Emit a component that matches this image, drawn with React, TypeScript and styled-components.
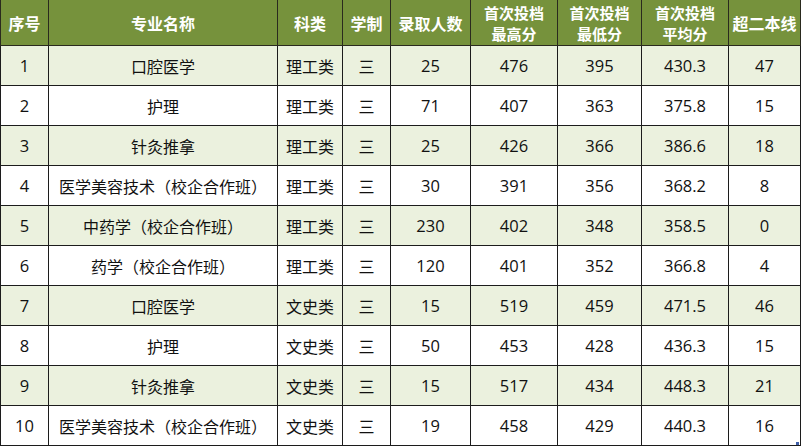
import React from "react";
import styled, { createGlobalStyle } from "styled-components";

const Global = createGlobalStyle`
  html, body { margin: 0; padding: 0; background: #ffffff; }
  body { font-family: "Open Sans", "Noto Sans CJK SC", sans-serif; }
`;

const Wrap = styled.div`
  position: relative;
  width: 800px;
`;

const Table = styled.table`
  border-collapse: collapse;
  table-layout: fixed;
  width: 800px;
  font-size: 16px;
  color: #111;
`;

const HeadCell = styled.th`
  background: #76923c;
  color: #ffffff;
  font-family: "Noto Sans CJK SC", sans-serif;
  font-weight: 700;
  font-size: 16px;
  line-height: 20px;
  height: 45px;
  padding: 0;
  text-align: center;
  vertical-align: middle;
  border: 1px solid #2a2a1e;
  border-top: none;
`;

const HeadLine = styled.span`
  display: block;
  font-size: 15px;
  line-height: 21px;
`;

const Row = styled.tr<{ $alt: boolean }>`
  background: ${(p) => (p.$alt ? "#ebf1de" : "#ffffff")};
`;

const Cell = styled.td<{ $cjk?: boolean }>`
  height: 39px;
  padding: 0;
  text-align: center;
  vertical-align: middle;
  border: 1px solid #1c1c1c;
  font-family: ${(p) =>
    p.$cjk ? `"Noto Sans CJK SC", sans-serif` : `"Open Sans", "Noto Sans CJK SC", sans-serif`};
  font-size: ${(p) => (p.$cjk ? "16px" : "16.5px")};
  white-space: nowrap;
`;

const Handle = styled.div`
  position: absolute;
  right: 1px;
  bottom: 1px;
  width: 3px;
  height: 3px;
  background: #3f5fa8;
`;

const widths = [48, 229, 65, 48, 80, 87, 84, 87, 72];

const two = (a: string, b: string) => (
  <>
    <HeadLine>{a}</HeadLine>
    <HeadLine>{b}</HeadLine>
  </>
);

const headers: React.ReactNode[] = [
  "序号",
  "专业名称",
  "科类",
  "学制",
  "录取人数",
  two("首次投档", "最高分"),
  two("首次投档", "最低分"),
  two("首次投档", "平均分"),
  "超二本线",
];

const rows: (string | number)[][] = [
  [1, "口腔医学", "理工类", "三", 25, 476, 395, "430.3", 47],
  [2, "护理", "理工类", "三", 71, 407, 363, "375.8", 15],
  [3, "针灸推拿", "理工类", "三", 25, 426, 366, "386.6", 18],
  [4, "医学美容技术（校企合作班）", "理工类", "三", 30, 391, 356, "368.2", 8],
  [5, "中药学（校企合作班）", "理工类", "三", 230, 402, 348, "358.5", 0],
  [6, "药学（校企合作班）", "理工类", "三", 120, 401, 352, "366.8", 4],
  [7, "口腔医学", "文史类", "三", 15, 519, 459, "471.5", 46],
  [8, "护理", "文史类", "三", 50, 453, 428, "436.3", 15],
  [9, "针灸推拿", "文史类", "三", 15, 517, 434, "448.3", 21],
  [10, "医学美容技术（校企合作班）", "文史类", "三", 19, 458, 429, "440.3", 16],
];

export default function App() {
  return (
    <Wrap>
      <Global />
      <Table>
        <colgroup>
          {widths.map((w, i) => (
            <col key={i} style={{ width: w }} />
          ))}
        </colgroup>
        <thead>
          <tr>
            {headers.map((h, i) => (
              <HeadCell key={i}>{h}</HeadCell>
            ))}
          </tr>
        </thead>
        <tbody>
          {rows.map((r, i) => (
            <Row key={i} $alt={i % 2 === 0}>
              {r.map((c, j) => (
                <Cell key={j} $cjk={j >= 1 && j <= 3}>
                  {c}
                </Cell>
              ))}
            </Row>
          ))}
        </tbody>
      </Table>
      <Handle />
    </Wrap>
  );
}
